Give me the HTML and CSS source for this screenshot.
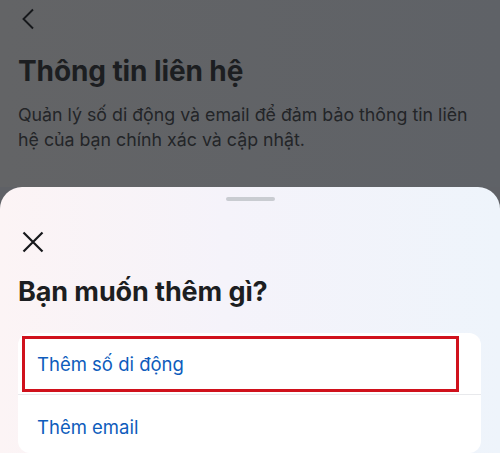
FILE: index.html
```html
<!DOCTYPE html>
<html lang="vi">
<head>
<meta charset="utf-8">
<link rel="stylesheet" href="styles.css">
</head>
<body>
<div class="page">
  <header class="top">
    <div class="back">
      <svg width="14" height="22" viewBox="0 0 14 22"><path d="M12 1.5 L2.5 11 L12 20.5" fill="none" stroke="#16181b" stroke-width="1.9"/></svg>
    </div>
    <h1 class="title">Thông tin liên hệ</h1>
    <p class="desc">Quản lý số di động và email để đảm bảo thông tin liên hệ của bạn chính xác và cập nhật.</p>
  </header>
  <section class="sheet">
    <div class="handle"></div>
    <div class="close">
      <svg width="22" height="22" viewBox="0 0 22 22"><path d="M1.5 1.5 L20.5 20.5 M20.5 1.5 L1.5 20.5" fill="none" stroke="#16181b" stroke-width="2.2"/></svg>
    </div>
    <h2 class="sheet-title">Bạn muốn thêm gì?</h2>
    <div class="card">
      <div class="item item-hl">Thêm số di động</div>
      <div class="item item-last">Thêm email</div>
    </div>
  </section>
</div>
</body>
</html>
```
FILE: styles.css
```css
html, body {
  margin: 0;
  padding: 0;
}
body {
  width: 500px;
  height: 453px;
  overflow: hidden;
  background: #5f6166;
  font-family: Inter, "Noto Sans", sans-serif;
}
.page {
  display: flex;
  flex-direction: column;
}
.top {
  padding: 0 18px;
  height: 187px;
  box-sizing: border-box;
  background: linear-gradient(90deg, #636466 0%, #5f6267 100%);
}
.back {
  height: 40px;
  padding-top: 8px;
  padding-left: 3px;
  box-sizing: border-box;
}
.title {
  margin: 14px 0 0;
  font-size: 28px;
  font-weight: 700;
  line-height: 34px;
  color: #1c1e21;
  letter-spacing: -0.1px;
}
.desc {
  margin: 14px 0 0;
  font-size: 17.8px;
  line-height: 25px;
  color: #232528;
}
.sheet {
  height: 266px;
  border-radius: 22px 22px 0 0;
  background: linear-gradient(90deg, #fcf4f5 0%, #f5f3fa 45%, #eef4fb 100%);
  padding: 0 18px;
  box-sizing: border-box;
  display: flex;
  flex-direction: column;
}
.handle {
  align-self: center;
  width: 49px;
  height: 4px;
  border-radius: 2px;
  background: #c9ccd1;
  margin-top: 10px;
}
.close {
  margin-top: 30px;
  padding-left: 4px;
  height: 22px;
}
.sheet-title {
  margin: 22px 0 0;
  font-size: 27px;
  font-weight: 700;
  line-height: 34px;
  color: #1c1e21;
  letter-spacing: -0.1px;
}
.card {
  margin-top: 24px;
  margin-right: 1px;
  background: #ffffff;
  border-radius: 12px;
  display: flex;
  flex-direction: column;
}
.item {
  height: 62px;
  display: flex;
  align-items: center;
  padding-left: 19px;
  font-size: 18.5px;
  color: #0e5cbc;
  box-sizing: border-box;
}
.item-hl {
  border-bottom: 1px solid #e8e9ec;
  position: relative;
}
.item-last {
  height: 58px;
  padding-top: 6px;
}
.item-hl::after {
  content: "";
  position: absolute;
  left: 4px;
  top: 3px;
  right: 22px;
  bottom: 2px;
  border: 3px solid #d0111c;
}
```
